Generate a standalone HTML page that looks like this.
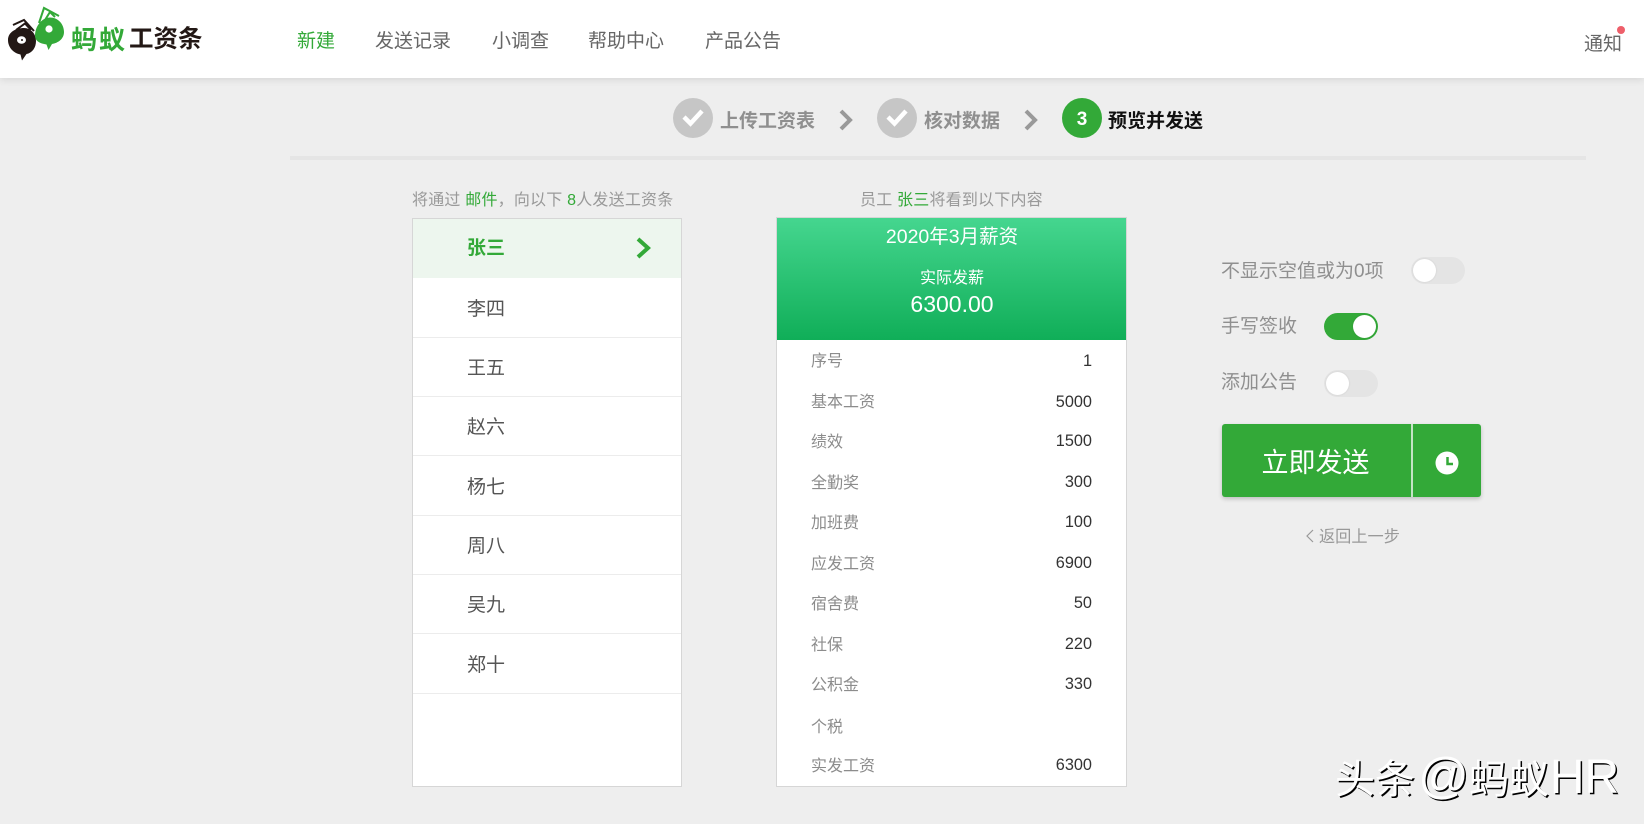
<!DOCTYPE html>
<html lang="zh-CN">
<head>
<meta charset="utf-8">
<title>蚂蚁工资条</title>
<style>
html,body{margin:0;padding:0;}
body{width:1644px;height:824px;overflow:hidden;position:relative;background:#eeeeee;font-family:"Liberation Sans","Noto Sans CJK SC",sans-serif;}
.t{position:absolute;line-height:30px;white-space:nowrap;}
.g{color:#33a938;}
#hd{position:absolute;left:0;top:0;width:1644px;height:78px;background:#fff;box-shadow:0 1px 8px rgba(0,0,0,.12);}
.nav{font-size:19px;color:#666;top:27px;}
.nav.g{color:#33a938;}
.circ{position:absolute;width:40px;height:40px;border-radius:50%;background:#c6c6c6;top:98px;}
.st{font-size:19px;font-weight:700;top:107px;color:#8f8f8f;}
.cap{font-size:16px;color:#999;top:186px;letter-spacing:.2px;}
#list{position:absolute;left:412px;top:218px;width:268px;height:567px;background:#fff;border:1px solid #d6d6d6;}
.it{position:absolute;left:0;width:268px;height:59px;border-bottom:1px solid #ececec;box-sizing:content-box;}
.it span{position:absolute;left:54px;top:17px;font-size:19px;line-height:30px;color:#555;}
#card{position:absolute;left:777px;top:218px;width:349px;height:568px;background:#fff;box-shadow:0 0 0 1px #d6d6d6;box-sizing:border-box;}
#chd{position:absolute;left:0;top:0;width:349px;height:122px;background:linear-gradient(#45d68f,#10ae58);}
.w{color:#fff;text-align:center;left:0;width:350px;}
.lb{font-size:16px;color:#8c8c8c;left:811px;}
.val{font-size:16.3px;color:#333;right:552px;}
.rl{font-size:19px;color:#8f8f8f;left:1221px;}
.tg{position:absolute;width:54px;height:27px;border-radius:14px;background:#e4e4e4;}
.tg i{position:absolute;left:2px;top:2px;width:23px;height:23px;border-radius:50%;background:#fff;box-shadow:0 0 2px rgba(0,0,0,.1);}
.tg.on{background:#33a938;}
.tg.on i{left:29px;}
#btn{position:absolute;left:1222px;top:424px;width:259px;height:73px;background:#33a938;border-radius:3px;box-shadow:0 2px 4px rgba(0,0,0,.2);}
#btn b{position:absolute;left:189px;top:0;width:2px;height:73px;background:#c4e3c5;}
#wm{position:absolute;left:1335px;top:746px;font-size:40px;line-height:60px;color:#fff;font-weight:400;white-space:nowrap;text-shadow:1.5px 1.5px 0 #000;}
#wm span{font-size:50px;margin-left:-8px;}
#wm em{font-style:normal;font-size:48px;margin-left:1px;}
</style>
</head>
<body>
<div id="hd"></div>
<svg style="position:absolute;left:0;top:0" width="72" height="66" viewBox="0 0 72 66">
  <path d="M8 40C8 32 16 28 24 28C31 28 36 34 36 41C36 48 32 53 26.500 54L22 60.500L20.500 54.500C13 53 8 47 8 40Z" fill="#231815"/>
  <ellipse cx="21.500" cy="40" rx="4.500" ry="3.800" fill="#fff"/><circle cx="22" cy="40" r="1" fill="#231815"/>
  <path d="M13 25L24 20L34 31M16 30L25 23.500L31 30" fill="none" stroke="#231815" stroke-width="2"/>
  <path d="M35 36C35 26 42 17.500 50 17.500C58 17.500 64 24 64 32C64 39 58 43 52 44L48.500 50L46.500 44.500C40 43.500 35 41 35 36Z" fill="#33a938"/>
  <circle cx="49" cy="29" r="3.600" fill="#fff"/>
  <path d="M39 23L44 8L59 16M45 20L50 12L55 17" fill="none" stroke="#33a938" stroke-width="2"/>
</svg>
<div class="t" style="left:71px;top:25px;font-size:26px;font-weight:700;color:#33a938;letter-spacing:2px">蚂蚁</div>
<div class="t" style="left:129px;top:25px;font-size:24.500px;font-weight:700;color:#231815">工资条</div>

<div class="t nav g" style="left:297px">新建</div>
<div class="t nav" style="left:375px">发送记录</div>
<div class="t nav" style="left:492px">小调查</div>
<div class="t nav" style="left:588px">帮助中心</div>
<div class="t nav" style="left:705px">产品公告</div>
<div class="t" style="left:1584px;top:30px;font-size:19px;color:#666">通知</div>
<div style="position:absolute;left:1617px;top:26px;width:8px;height:8px;border-radius:50%;background:#ee5f6a"></div>

<div class="circ" style="left:673px"></div>
<svg style="position:absolute;left:673px;top:96px" width="40" height="40"><path d="M11 21L17.500 27.500L29 15" fill="none" stroke="#fff" stroke-width="4.500"/></svg>
<div class="t st" style="left:720px">上传工资表</div>
<svg style="position:absolute;left:838px;top:109px" width="18" height="22"><path d="M3 2L12 11L3 20" fill="none" stroke="#999" stroke-width="4"/></svg>
<div class="circ" style="left:877px"></div>
<svg style="position:absolute;left:877px;top:96px" width="40" height="40"><path d="M11 21L17.500 27.500L29 15" fill="none" stroke="#fff" stroke-width="4.500"/></svg>
<div class="t st" style="left:924px">核对数据</div>
<svg style="position:absolute;left:1023px;top:109px" width="18" height="22"><path d="M3 2L12 11L3 20" fill="none" stroke="#999" stroke-width="4"/></svg>
<div class="circ" style="left:1062px;background:#33a938"></div>
<div class="t" style="left:1062px;top:105px;width:40px;text-align:center;font-size:19px;font-weight:700;color:#fff">3</div>
<div class="t st" style="left:1108px;color:#111">预览并发送</div>

<div style="position:absolute;left:290px;top:156px;width:1296px;height:4px;background:#e5e5e5"></div>

<div class="t cap" style="left:412px">将通过 <span class="g">邮件</span>，向以下 <span class="g">8</span>人发送工资条</div>
<div class="t cap" style="left:860px">员工 <span class="g">张三</span>将看到以下内容</div>

<div id="list">
  <div class="it" style="top:0;background:#edf6ee;border-bottom:none"><span style="color:#33a938;font-weight:700;top:15px">张三</span>
    <svg style="position:absolute;left:222px;top:18px" width="20" height="22"><path d="M3 2L13 11L3 20" fill="none" stroke="#33a938" stroke-width="4"/></svg></div>
  <div class="it" style="top:59px"><span>李四</span></div>
  <div class="it" style="top:118px"><span>王五</span></div>
  <div class="it" style="top:177px"><span>赵六</span></div>
  <div class="it" style="top:237px"><span>杨七</span></div>
  <div class="it" style="top:296px"><span>周八</span></div>
  <div class="it" style="top:355px"><span>吴九</span></div>
  <div class="it" style="top:415px"><span>郑十</span></div>
</div>

<div id="card"><div id="chd"></div></div>
<div class="t w" style="left:777px;top:222px;font-size:19.500px">2020年3月薪资</div>
<div class="t w" style="left:777px;top:264px;font-size:16px">实际发薪</div>
<div class="t w" style="left:777px;top:289px;font-size:23px">6300.00</div>

<div class="t lb" style="top:347px">序号</div><div class="t val" style="top:346px">1</div>
<div class="t lb" style="top:388px">基本工资</div><div class="t val" style="top:387px">5000</div>
<div class="t lb" style="top:428px">绩效</div><div class="t val" style="top:426px">1500</div>
<div class="t lb" style="top:469px">全勤奖</div><div class="t val" style="top:467px">300</div>
<div class="t lb" style="top:509px">加班费</div><div class="t val" style="top:507px">100</div>
<div class="t lb" style="top:550px">应发工资</div><div class="t val" style="top:548px">6900</div>
<div class="t lb" style="top:590px">宿舍费</div><div class="t val" style="top:588px">50</div>
<div class="t lb" style="top:631px">社保</div><div class="t val" style="top:629px">220</div>
<div class="t lb" style="top:671px">公积金</div><div class="t val" style="top:669px">330</div>
<div class="t lb" style="top:713px">个税</div>
<div class="t lb" style="top:752px">实发工资</div><div class="t val" style="top:750px">6300</div>

<div class="t rl" style="top:257px">不显示空值或为0项</div>
<div class="tg" style="left:1411px;top:257px"><i></i></div>
<div class="t rl" style="top:312px">手写签收</div>
<div class="tg on" style="left:1324px;top:313px"><i></i></div>
<div class="t rl" style="top:368px">添加公告</div>
<div class="tg" style="left:1324px;top:370px"><i></i></div>

<div id="btn"><b></b></div>
<div class="t" style="left:1221px;top:448px;width:189px;text-align:center;font-size:27px;color:#fff">立即发送</div>
<svg style="position:absolute;left:1435px;top:451px" width="24" height="24"><circle cx="12" cy="12" r="11.500" fill="#fff"/><path d="M12.500 6V13H18" fill="none" stroke="#33a938" stroke-width="2.500"/></svg>

<svg style="position:absolute;left:1305px;top:528px" width="10" height="16"><path d="M8 2L2 8L8 14" fill="none" stroke="#999" stroke-width="1.200"/></svg>
<div class="t" style="left:1319px;top:522px;font-size:16.200px;color:#999">返回上一步</div>

<div id="wm">头条 <span>@</span>蚂蚁<em>HR</em></div>
</body>
</html>
